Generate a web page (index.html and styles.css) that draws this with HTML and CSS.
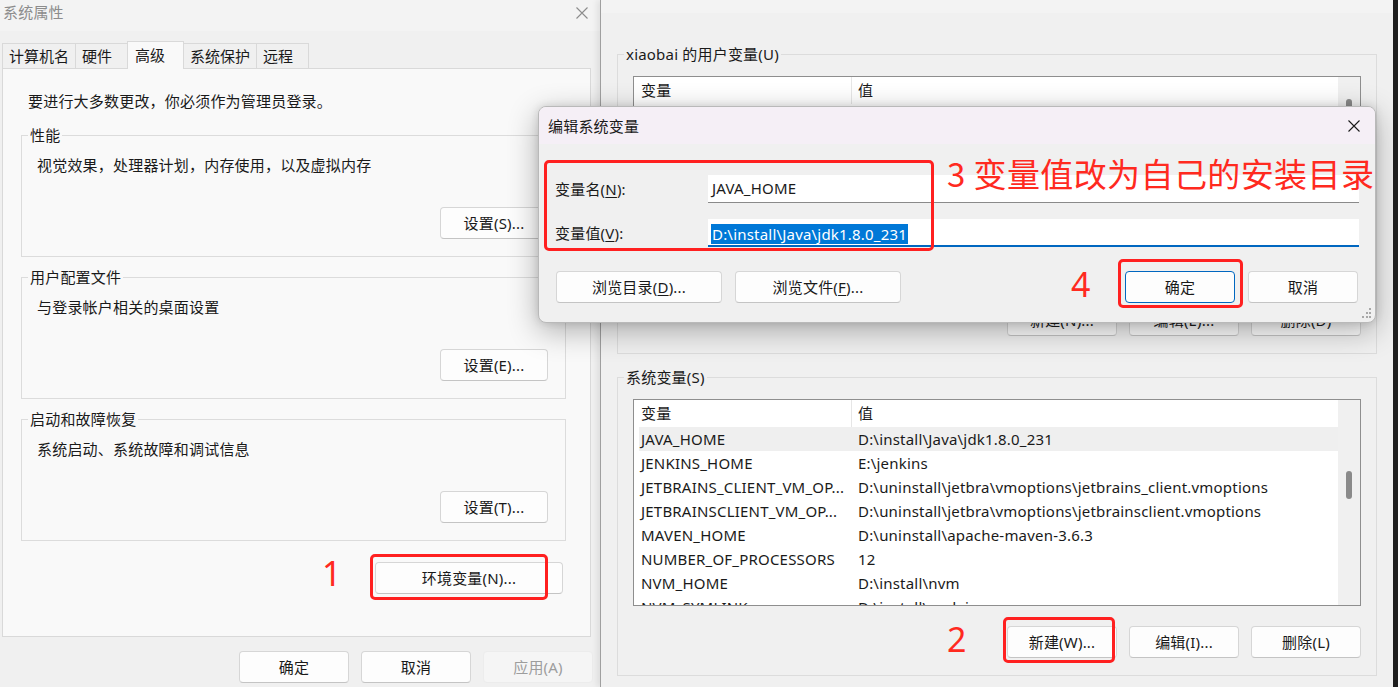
FILE: index.html
```html
<!DOCTYPE html>
<html lang="zh-CN">
<head>
<meta charset="utf-8">
<title>编辑系统变量</title>
<link rel="stylesheet" href="styles.css">
</head>
<body>
<main class="desktop">
  <section class="win win-sys">
    <header class="titlebar">
      <span class="title">系统属性</span>
      <svg class="close close-inactive" viewBox="0 0 12 12"><path d="M0.5 0.5 L11.5 11.5 M11.5 0.5 L0.5 11.5"/></svg>
    </header>
    <nav class="tabs">
      <span class="tab">计算机名</span>
      <span class="tab">硬件</span>
      <span class="tab tab-active">高级</span>
      <span class="tab">系统保护</span>
      <span class="tab">远程</span>
    </nav>
    <div class="panel">
      <p class="intro">要进行大多数更改，你必须作为管理员登录。</p>
      <fieldset class="group">
        <legend>性能</legend>
        <p class="desc">视觉效果，处理器计划，内存使用，以及虚拟内存</p>
        <div class="group-actions"><button class="btn btn-set">设置(S)...</button></div>
      </fieldset>
      <fieldset class="group">
        <legend>用户配置文件</legend>
        <p class="desc">与登录帐户相关的桌面设置</p>
        <div class="group-actions"><button class="btn btn-set">设置(E)...</button></div>
      </fieldset>
      <fieldset class="group">
        <legend>启动和故障恢复</legend>
        <p class="desc">系统启动、系统故障和调试信息</p>
        <div class="group-actions"><button class="btn btn-set">设置(T)...</button></div>
      </fieldset>
      <div class="env-row"><button class="btn btn-env">环境变量(N)...</button></div>
    </div>
    <footer class="footer">
      <button class="btn btn-foot">确定</button>
      <button class="btn btn-foot">取消</button>
      <button class="btn btn-foot" disabled>应用(A)</button>
    </footer>
  </section>

  <section class="win win-env">
    <div class="env-top"></div>
    <div class="env-body">
      <fieldset class="vars">
        <legend>xiaobai 的用户变量(U)</legend>
        <div class="listbox">
          <div class="list-main">
            <div class="list-head"><span>变量</span><span>值</span></div>
          </div>
          <div class="scrollbar"><div class="thumb thumb-user"></div></div>
        </div>
        <div class="vars-actions">
          <button class="btn btn-var">新建(N)...</button>
          <button class="btn btn-var">编辑(E)...</button>
          <button class="btn btn-var">删除(D)</button>
        </div>
      </fieldset>
      <fieldset class="vars vars-sys">
        <legend>系统变量(S)</legend>
        <div class="listbox">
          <div class="list-main">
            <div class="list-head"><span>变量</span><span>值</span></div>
            <div class="list-rows">
              <div class="row row-selected"><span>JAVA_HOME</span><span>D:\install\Java\jdk1.8.0_231</span></div>
              <div class="row"><span>JENKINS_HOME</span><span>E:\jenkins</span></div>
              <div class="row"><span>JETBRAINS_CLIENT_VM_OP...</span><span>D:\uninstall\jetbra\vmoptions\jetbrains_client.vmoptions</span></div>
              <div class="row"><span>JETBRAINSCLIENT_VM_OP...</span><span>D:\uninstall\jetbra\vmoptions\jetbrainsclient.vmoptions</span></div>
              <div class="row"><span>MAVEN_HOME</span><span>D:\uninstall\apache-maven-3.6.3</span></div>
              <div class="row"><span>NUMBER_OF_PROCESSORS</span><span>12</span></div>
              <div class="row"><span>NVM_HOME</span><span>D:\install\nvm</span></div>
              <div class="row"><span>NVM_SYMLINK</span><span>D:\install\nodejs</span></div>
            </div>
          </div>
          <div class="scrollbar"><div class="thumb thumb-sys"></div></div>
        </div>
        <div class="vars-actions">
          <button class="btn btn-var">新建(W)...</button>
          <button class="btn btn-var">编辑(I)...</button>
          <button class="btn btn-var">删除(L)</button>
        </div>
      </fieldset>
    </div>
  </section>

  <section class="dialog">
    <header class="dlg-title">
      <span>编辑系统变量</span>
      <svg class="close" viewBox="0 0 12 12"><path d="M0.5 0.5 L11.5 11.5 M11.5 0.5 L0.5 11.5"/></svg>
    </header>
    <div class="dlg-body">
      <div class="field">
        <label>变量名(<u>N</u>):</label>
        <div class="input">JAVA_HOME</div>
      </div>
      <div class="field field-focus">
        <label>变量值(<u>V</u>):</label>
        <div class="input input-focus"><span class="sel">D:\install\Java\jdk1.8.0_231</span></div>
      </div>
      <div class="dlg-actions">
        <div class="btn-group">
          <button class="btn btn-browse">浏览目录(<u>D</u>)...</button>
          <button class="btn btn-browse">浏览文件(<u>F</u>)...</button>
        </div>
        <div class="btn-group">
          <button class="btn btn-dlg btn-default">确定</button>
          <button class="btn btn-dlg">取消</button>
        </div>
      </div>
    </div>
    <svg class="grip" viewBox="0 0 12 12">
      <rect x="9" y="1" width="2" height="2"/>
      <rect x="6" y="5" width="2" height="2"/><rect x="9" y="5" width="2" height="2"/>
      <rect x="2" y="9" width="2" height="2"/><rect x="6" y="9" width="2" height="2"/><rect x="9" y="9" width="2" height="2"/>
    </svg>
  </section>

  <div class="mark-box box-1"></div>
  <div class="mark-box box-2"></div>
  <div class="mark-box box-3"></div>
  <div class="mark-box box-4"></div>
  <span class="mark-num num-1">1</span>
  <span class="mark-num num-2">2</span>
  <span class="mark-num num-4">4</span>
  <span class="mark-text">3 变量值改为自己的安装目录</span>
  <div class="edge"></div>
</main>
</body>
</html>
```

FILE: styles.css
```css
* { box-sizing: border-box; }
html, body { margin: 0; padding: 0; }
body {
  width: 1398px;
  height: 687px;
  overflow: hidden;
  background: #1f1f1f;
  font-family: "Noto Sans", "Noto Sans CJK SC", sans-serif;
  font-size: 15px;
  letter-spacing: 0.2px;
  color: #1a1a1a;
}
p { margin: 0; }
.desktop { position: relative; width: 1398px; height: 687px; overflow: hidden; }

/* generic button */
.btn {
  height: 32px;
  padding: 0;
  border: 1px solid #d6d6d6;
  border-bottom-color: #c4c4c4;
  border-radius: 4px;
  background: #fdfdfd;
  font-family: inherit;
  font-size: 15px;
  letter-spacing: 0.2px;
  color: #1a1a1a;
  line-height: 29px;
}
.btn:disabled { background: #f5f5f5; border-color: #ececec; color: #9d9d9d; }
u { text-decoration: underline; text-underline-offset: 2px; }

.close { width: 12px; height: 12px; fill: none; stroke: #1a1a1a; stroke-width: 1.1; }
.close-inactive { stroke: #8c8c8c; }

/* windows on the desktop */
.win { position: absolute; top: 0; height: 687px; background: #f0f0f0; display: flex; flex-direction: column; }
.win-sys { left: 0; width: 600px; }
.win-env { left: 600px; width: 793px; border-left: 1px solid #9f9f9f; box-shadow: -3px 0 6px rgba(0,0,0,0.08); }

/* system properties window */
.titlebar {
  height: 31px;
  background: #f3f3f3;
  display: flex;
  justify-content: space-between;
  align-items: flex-start;
  padding: 2px 12px 0 3px;
}
.titlebar .title { line-height: 20px; color: #8c8c8c; }
.titlebar .close { margin-top: 5px; }

.tabs { display: flex; align-items: flex-end; height: 26px; margin: 11px 0 0 2px; letter-spacing: 0; }
.tab {
  height: 25px;
  min-width: 53px;
  padding: 0 6px;
  line-height: 25px;
  border: 1px solid #d9d9d9;
  border-bottom: none;
  margin-right: -1px;
  background: #f0f0f0;
}
.tab-active {
  position: relative;
  z-index: 1;
  height: 28px;
  min-width: 57px;
  padding: 0 7px;
  line-height: 26px;
  margin-bottom: -1px;
  background: #f9f9f9;
}

.panel {
  height: 569px;
  margin: 0 9px 0 2px;
  border: 1px solid #d9d9d9;
  background: #f9f9f9;
  padding: 22px 24px 0 18px;
}
.intro { line-height: 20px; margin: 0 0 14px 7px; }
.group {
  margin: 0;
  min-width: 0;
  padding: 10px 17px 17px 6px;
  border: 1px solid #dcdcdc;
}
.group + .group { margin-top: 10px; }
.group legend { padding: 0 2px; line-height: 20px; }
.desc { line-height: 20px; margin: 0 0 32px 9px; }
.group-actions { display: flex; justify-content: flex-end; }
.btn-set { width: 108px; }
.env-row { display: flex; justify-content: flex-end; margin: 21px 3px 0 0; }
.btn-env { width: 188px; }
.footer { display: flex; justify-content: flex-end; gap: 12px; padding: 14px 7px 0 0; }
.btn-foot { width: 110px; }

/* environment variables window */
.env-top { height: 13px; background: #f3f3f3; }
.env-body { padding: 31px 16px 0 16px; }
.vars {
  margin: 0;
  min-width: 0;
  padding: 12px 15px 17px 6px;
  border: 1px solid #dcdcdc;
}
.vars-sys { margin-top: 13px; }
.vars legend { padding: 0 2px; line-height: 20px; }
.listbox {
  margin-left: 9px;
  height: 207px;
  border: 1px solid #8e8e8e;
  background: #fff;
  display: flex;
  overflow: hidden;
}
.list-main { flex: 1; min-width: 0; overflow: hidden; }
.list-head { display: grid; grid-template-columns: 217px 1fr; height: 27px; line-height: 27px; }
.list-head span { padding-left: 7px; }
.list-head span + span { border-left: 1px solid #e6e6e6; padding-left: 6px; }
.list-rows { padding-left: 5px; }
.row { display: grid; grid-template-columns: 212px 1fr; height: 24px; line-height: 24px; white-space: nowrap; }
.row span { overflow: hidden; }
.row span:first-child { padding-left: 2px; }
.row span + span { padding-left: 7px; }
.row-selected { background: #efefef; }
.scrollbar { width: 22px; background: #f0f0f0; }
.thumb { width: 6px; height: 28px; margin: 0 auto; border-radius: 3px; background: #8a8a8a; }
.thumb-user { margin-top: 22px; }
.thumb-sys { margin-top: 71px; }
.vars-actions { display: flex; justify-content: flex-end; gap: 12px; margin-top: 21px; }
.vars-sys .vars-actions { margin-top: 20px; }
.btn-var { width: 110px; }

/* edit dialog (floats over the env window) */
.dialog {
  position: absolute;
  left: 538px;
  top: 106px;
  width: 838px;
  height: 217px;
  border: 1px solid #b9b9b9;
  border-radius: 8px;
  background: #f0f0f0;
  box-shadow: 0 8px 30px rgba(0,0,0,0.30), 0 0 8px rgba(0,0,0,0.12);
  overflow: hidden;
  display: flex;
  flex-direction: column;
}
.dlg-title {
  height: 37px;
  flex: none;
  background: #f5eff6;
  display: flex;
  align-items: center;
  justify-content: space-between;
  padding: 0 15px 0 9px;
}
.dlg-body { padding: 31px 16px 0 16px; }
.field { display: grid; grid-template-columns: 153px 1fr; align-items: center; height: 28px; }
.field + .field { margin-top: 16px; }
.field label { line-height: 20px; }
.input {
  height: 28px;
  background: #fff;
  border-bottom: 1px solid #8a8a8a;
  padding-left: 4px;
  line-height: 27px;
  white-space: nowrap;
}
.input-focus { border-bottom: 2px solid #0067c0; padding-left: 3px; line-height: 26px; }
.sel { display: inline-block; line-height: 20px; padding: 0 1px; background: #0078d7; color: #fff; vertical-align: middle; }
.dlg-actions { display: flex; justify-content: space-between; margin: 24px 1px 0 1px; }
.btn-group { display: flex; gap: 13px; }
.btn-browse { width: 166px; }
.btn-dlg { width: 110px; }
.btn-default { border-color: #0067c0; }
.grip { position: absolute; right: 3px; bottom: 3px; width: 12px; height: 12px; fill: #a8a8a8; }

/* red annotations drawn over the screenshot */
.mark-box { position: absolute; border: 3px solid #ff2020; border-radius: 5px; }
.box-1 { left: 370px; top: 554px; width: 178px; height: 46px; }
.box-2 { left: 1003px; top: 617px; width: 112px; height: 46px; }
.box-3 { left: 544px; top: 160px; width: 390px; height: 91px; }
.box-4 { left: 1118px; top: 259px; width: 125px; height: 49px; }
.mark-num {
  position: absolute;
  font-family: "Noto Sans", sans-serif;
  font-size: 34px;
  line-height: 34px;
  letter-spacing: 0;
  color: #ff2a1f;
}
.num-1 { left: 322px; top: 556px; }
.num-2 { left: 947px; top: 622px; }
.num-4 { left: 1071px; top: 267px; }
.mark-text {
  position: absolute;
  left: 947px;
  top: 157px;
  font-family: "Noto Sans CJK SC", sans-serif;
  font-size: 33px;
  line-height: 33px;
  letter-spacing: 0.4px;
  color: #ff2a1f;
  white-space: nowrap;
}
.edge { position: absolute; left: 1393px; top: 0; width: 5px; height: 687px; background: #1f1f1f; }
```
